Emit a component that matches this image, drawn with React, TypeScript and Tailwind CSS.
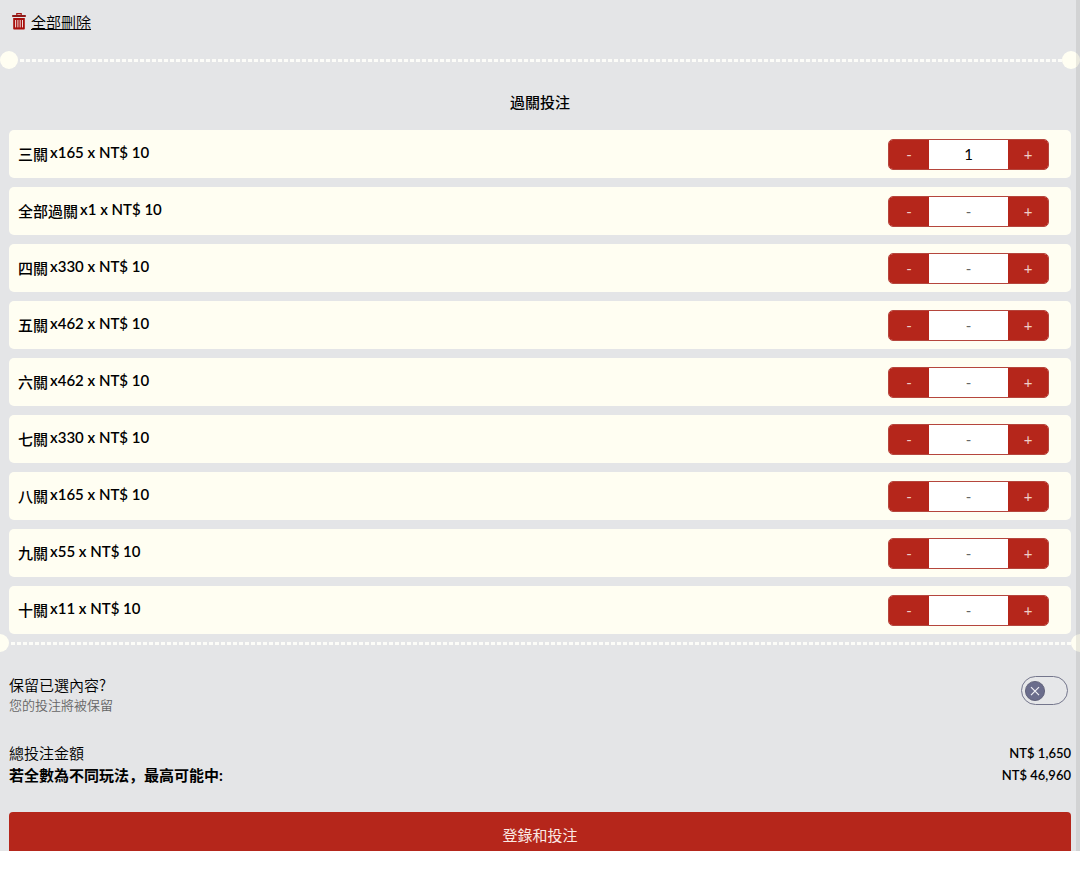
import { useState } from 'react';
import clsx from 'clsx';

interface ParlayRow {
  id: string;
  name: string;
  combos: number;
}

const PARLAYS: ParlayRow[] = [
  { id: 'p3', name: '三關', combos: 165 },
  { id: 'all', name: '全部過關', combos: 1 },
  { id: 'p4', name: '四關', combos: 330 },
  { id: 'p5', name: '五關', combos: 462 },
  { id: 'p6', name: '六關', combos: 462 },
  { id: 'p7', name: '七關', combos: 330 },
  { id: 'p8', name: '八關', combos: 165 },
  { id: 'p9', name: '九關', combos: 55 },
  { id: 'p10', name: '十關', combos: 11 },
];

function TrashIcon() {
  return (
    <svg className="h-[17px] w-[14px] shrink-0" viewBox="0 0 14 17" fill="none" aria-hidden="true">
      <path d="M4.8 2.2V.7h4.4v1.5" stroke="#a3120f" strokeWidth="1.2" />
      <path d="M.2 2h13.6v2H.2z" fill="#8f1a18" />
      <path d="M1.2 5h11.6v10.8a.8.8 0 0 1-.8.8H2a.8.8 0 0 1-.8-.8z" fill="#a80f0c" />
      <path d="M3.6 7v7.4M5.9 7v7.4M8.2 7v7.4M10.5 7v7.4" stroke="#f0dcdc" strokeWidth="1" />
    </svg>
  );
}

// Ticket-style perforation with a punched hole on both ends
function Perforation({ outside = false }: { outside?: boolean }) {
  return (
    <div className={clsx('flex items-center', outside && '-mx-[9px]')}>
      <span className="size-[18px] shrink-0 rounded-full bg-[#fffef2]" />
      <span className="h-[3px] flex-1 bg-[repeating-linear-gradient(90deg,transparent_0_2px,#fcfcf8_2px_6px)]" />
      <span className="size-[18px] shrink-0 rounded-full bg-[#fffef2]" />
    </div>
  );
}

interface StepperProps {
  label: string;
  value: number;
  onChange: (value: number) => void;
}

function Stepper({ label, value, onChange }: StepperProps) {
  return (
    <div className="flex h-[31px] w-[161px] overflow-hidden rounded-[5px] border border-[#b5463d] bg-white text-[15px]">
      <button
        type="button"
        aria-label={`${label} -`}
        onClick={() => onChange(Math.max(0, value - 1))}
        className="w-10 shrink-0 bg-[#b5261b] text-[#f0cfc8]"
      >
        -
      </button>
      <input
        type="text"
        inputMode="numeric"
        aria-label={label}
        placeholder="-"
        value={value || ''}
        onChange={(e) => onChange(Number(e.target.value) || 0)}
        className="w-0 min-w-0 flex-1 text-center text-black outline-none placeholder:text-[#666]"
      />
      <button
        type="button"
        aria-label={`${label} +`}
        onClick={() => onChange(value + 1)}
        className="w-10 shrink-0 bg-[#b5261b] text-[#f0cfc8]"
      >
        +
      </button>
    </div>
  );
}

export default function App() {
  const [stakes, setStakes] = useState<Record<string, number>>({ p3: 1 });
  const [keep, setKeep] = useState(false);

  return (
    <main className="relative overflow-hidden bg-[#e4e5e7] font-[Lato,'Noto_Sans_CJK_SC',sans-serif] text-[15px] text-black">
      <header className="flex h-[51px] items-center px-3 pb-2">
        <button type="button" onClick={() => setStakes({})} className="flex items-center gap-[5px]">
          <TrashIcon />
          <span className="font-['Noto_Sans_CJK_SC',sans-serif] leading-5 font-[350] underline">
            全部刪除
          </span>
        </button>
      </header>

      <Perforation />

      <h2 className="pt-[23px] pb-[18px] text-center leading-5 font-medium">過關投注</h2>

      <ul className="flex flex-col gap-[9px] px-[9px]">
        {PARLAYS.map((row) => (
          <li
            key={row.id}
            className="flex h-12 items-center justify-between rounded-[5px] bg-[#fffef2] pr-[22px] pl-[9px]"
          >
            <div className="flex items-start gap-0.5 pb-0.5">
              <span className="pt-0.5 leading-5 font-medium">{row.name}</span>
              <span className="leading-5 font-semibold">x{row.combos} x NT$ 10</span>
            </div>
            <Stepper
              label={row.name}
              value={stakes[row.id] ?? 0}
              onChange={(value) => setStakes({ ...stakes, [row.id]: value })}
            />
          </li>
        ))}
      </ul>

      <Perforation outside />

      <section className="flex items-start justify-between px-[9px] pt-6">
        <label htmlFor="keep" className="font-['Noto_Sans_CJK_SC',sans-serif] font-[350]">
          <span className="block leading-[18px]">保留已選內容?</span>
          <span className="block text-[13px] leading-[22px] text-[#666]">您的投注將被保留</span>
        </label>
        <span className="mr-[3px] grid h-[29px] w-[47px] items-center">
          <input
            id="keep"
            type="checkbox"
            role="switch"
            checked={keep}
            onChange={(e) => setKeep(e.target.checked)}
            className="col-start-1 row-start-1 h-full w-full appearance-none rounded-full border border-[#74768c] bg-[#e6e7e9]"
          />
          <svg
            className={clsx(
              'pointer-events-none col-start-1 row-start-1 mx-1 size-5',
              keep && 'justify-self-end'
            )}
            viewBox="0 0 20 20"
            aria-hidden="true"
          >
            <circle cx="10" cy="10" r="9.6" fill="#6b6d8c" stroke="#55576f" strokeWidth=".8" />
            <path d="m6 6.2 8 8m0-8-8 8" stroke="#f1f1f5" strokeWidth="1.2" />
          </svg>
        </span>
      </section>

      <dl className="px-[9px] pt-[26px] pb-[26px] leading-[22px]">
        <div className="flex items-end justify-between">
          <dt className="font-[350]">總投注金額</dt>
          <dd className="text-[13px] font-semibold">NT$ 1,650</dd>
        </div>
        <div className="flex items-end justify-between">
          <dt className="font-bold">若全數為不同玩法，最高可能中:</dt>
          <dd className="text-[13px] font-semibold">NT$ 46,960</dd>
        </div>
      </dl>

      <div className="px-[9px]">
        <button
          type="button"
          className="block h-[39px] w-full rounded-t-[4px] bg-[#b5261b] pt-2 text-[#fbe9e4]"
        >
          登錄和投注
        </button>
      </div>

      {/* scroll track over the right edge */}
      <span className="pointer-events-none absolute inset-y-0 right-0 w-1 bg-black/8" />
    </main>
  );
}
